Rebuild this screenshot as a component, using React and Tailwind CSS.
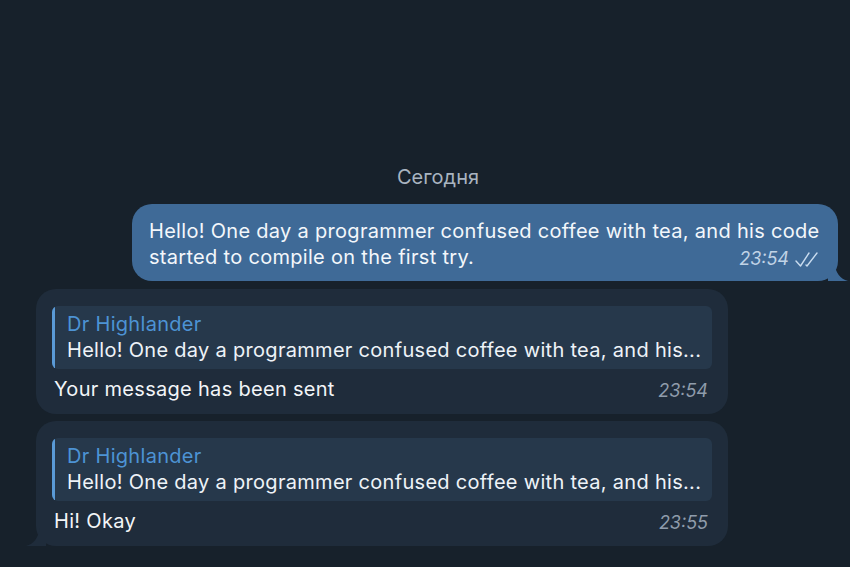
import React from 'react';

const font = { fontFamily: 'Inter, "Noto Sans", sans-serif' };

const DoubleCheck = () => (
  <svg width="28" height="17" viewBox="0 0 28 17" fill="none" className="ml-[5px]">
    <path d="M2 10 L6.5 15 L15 2" stroke="#c9dcef" strokeWidth="1.4" strokeLinecap="round" strokeLinejoin="round" />
    <path d="M12 14 L13 15 L23 2" stroke="#c9dcef" strokeWidth="1.4" strokeLinecap="round" strokeLinejoin="round" />
  </svg>
);

const Quote = () => (
  <div className="mx-[16px] mt-[17px] flex rounded-[6px] bg-[#26384b] overflow-hidden">
    <div className="w-[3px] bg-[#5a9ad6] rounded-l-[3px]" />
    <div className="pl-[12px] pr-[10px] pt-[5px] pb-[6px] tracking-[0.3px]">
      <div className="text-[20px] leading-[26px] text-[#4d93d4]">Dr Highlander</div>
      <div className="text-[20px] leading-[26px] text-[#eef3f8] whitespace-nowrap">
        Hello! One day a programmer confused coffee with tea, and his...
      </div>
    </div>
  </div>
);

const Incoming = ({ text, time, tail }) => (
  <div className="relative ml-[36px] w-[692px] rounded-[20px] bg-[#1f2c3b]">
    <Quote />
    <div className="flex items-end justify-between pl-[18px] pr-[20px] pt-[7px] pb-[12px]">
      <span className="text-[20px] leading-[26px] tracking-[0.3px] text-[#f2f5f8]">{text}</span>
      <span className="text-[18px] leading-[22px] italic text-[#8f9cab]">{time}</span>
    </div>
    {tail && (
      <svg width="20" height="18" viewBox="0 0 20 18" className="absolute left-[-10px] bottom-0">
        <path d="M20 0 L20 18 L0 18 C8 16 12 10 14 0 Z" fill="#1f2c3b" />
      </svg>
    )}
  </div>
);

export default function App() {
  return (
    <div className="w-[850px] h-[567px] bg-[#17212b] overflow-hidden flex flex-col" style={font}>
      <div className="pt-[163px] pl-[26px] text-center text-[20px] leading-[28px] text-[#a9b4c0]">Сегодня</div>
      <div className="flex justify-end pr-[12px] mt-[13px]">
        <div className="relative w-[706px] rounded-[20px] bg-[#3f6a97] pl-[17px] pr-[16px] pt-[14px] pb-[11px]">
          <div className="text-[20px] leading-[26px] tracking-[0.3px] text-[#f3f7fb] whitespace-nowrap">
            Hello! One day a programmer confused coffee with tea, and his code
          </div>
          <div className="flex items-end justify-between">
            <span className="text-[20px] leading-[26px] tracking-[0.3px] text-[#f3f7fb]">started to compile on the first try.</span>
            <span className="flex items-center text-[18px] leading-[22px] italic text-[#c0d3e6]">
              23:54
              <DoubleCheck />
            </span>
          </div>
          <svg width="20" height="18" viewBox="0 0 20 18" className="absolute right-[-10px] bottom-0">
            <path d="M0 0 L0 18 L20 18 C12 16 8 10 6 0 Z" fill="#3f6a97" />
          </svg>
        </div>
      </div>
      <div className="mt-[8px] flex flex-col gap-[7px]">
        <Incoming text="Your message has been sent" time="23:54" />
        <Incoming text="Hi! Okay" time="23:55" tail />
      </div>
    </div>
  );
}
